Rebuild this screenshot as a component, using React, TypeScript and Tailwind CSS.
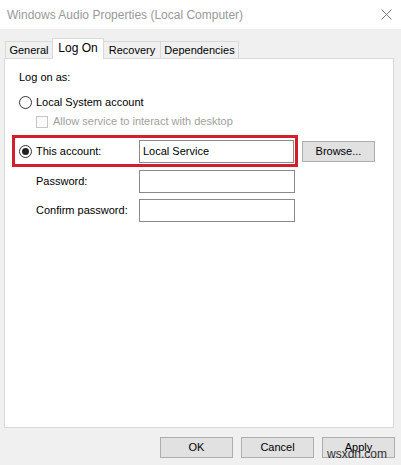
import React from "react";

const font = { fontFamily: '"Liberation Sans", Arial, sans-serif' };

function Radio({ checked }: { checked?: boolean }) {
  return (
    <span className="flex h-[13px] w-[13px] shrink-0 items-center justify-center rounded-full border border-[#333333] bg-white">
      {checked && <span className="h-[7px] w-[7px] rounded-full bg-[#222222]" />}
    </span>
  );
}

function Field({ value, w }: { value?: string; w: string }) {
  return (
    <div className={`flex h-[23px] items-center border border-[#8a8a8a] bg-white pl-[3px] text-[11px] text-black ${w}`}>
      {value}
    </div>
  );
}

function Btn({ label }: { label: string }) {
  return (
    <div className="flex h-[21px] w-[73px] items-center justify-center border border-[#adadad] bg-[#e1e1e1] text-[11px] text-black">
      {label}
    </div>
  );
}

function Tab({ label, active, w }: { label: string; active?: boolean; w: string }) {
  return active ? (
    <div
      className={`relative z-10 -mb-px -ml-px flex h-[21px] items-center justify-center border border-b-0 border-[#d9d9d9] bg-white pb-[2px] text-[12px] text-black ${w}`}
    >
      {label}
    </div>
  ) : (
    <div
      className={`-ml-px flex h-[17px] items-center justify-center border border-b-0 border-[#d9d9d9] bg-[#f0f0f0] text-[11px] text-black first:ml-0 ${w}`}
    >
      {label}
    </div>
  );
}

export default function App() {
  return (
    <div className="relative h-[465px] w-[401px] overflow-hidden bg-[#f0f0f0]" style={font}>
      {/* title bar */}
      <div className="flex h-[29px] items-center justify-between bg-white pl-[7px] pr-[9px]">
        <span className="text-[12px] text-[#999999]">Windows Audio Properties (Local Computer)</span>
        <svg width="11" height="11" viewBox="0 0 11 11" className="mb-[1px]">
          <path d="M0.5 0.5 L10.5 10.5 M10.5 0.5 L0.5 10.5" stroke="#7a7a7a" strokeWidth="1" fill="none" />
        </svg>
      </div>

      <div className="pl-[4px] pr-[7px] pt-[9px]">
        {/* tabs */}
        <div className="flex h-[20px] items-end pl-[1px]">
          <Tab label="General" w="w-[48px]" />
          <Tab label="Log On" active w="w-[52px]" />
          <Tab label="Recovery" w="w-[58px]" />
          <Tab label="Dependencies" w="w-[79px]" />
        </div>

        {/* page */}
        <div className="h-[370px] w-[390px] border border-[#d9d9d9] bg-white text-[11px] text-black">
          <div className="mt-[11px] pl-[14px] leading-[15px]">Log on as:</div>

          <div className="mt-[10px] flex h-[15px] items-center pl-[14px]">
            <Radio />
            <span className="ml-[4px]">Local System account</span>
          </div>

          <div className="mt-[4px] flex h-[15px] items-center pl-[31px]">
            <span className="h-[12px] w-[12px] border border-[#c6c6c6] bg-[#fafafa]" />
            <span className="ml-[5px] text-[#a0a0a0]">Allow service to interact with desktop</span>
          </div>

          <div className="mt-[6px] flex items-center pl-[7px]">
            <div className="flex h-[32px] w-[286px] items-center border-[3px] border-[#d11f2c] pl-[4px]">
              <div className="flex w-[120px] items-center">
                <Radio checked />
                <span className="ml-[4px]">This account:</span>
              </div>
              <Field value="Local Service" w="w-[155px]" />
            </div>
            <div className="ml-[4px] mt-[1px]">
              <Btn label="Browse..." />
            </div>
          </div>

          <div className="mt-[3px] flex items-center pl-[31px]">
            <span className="w-[103px]">Password:</span>
            <Field w="w-[156px]" />
          </div>

          <div className="mt-[6px] flex items-center pl-[31px]">
            <span className="w-[103px]">Confirm password:</span>
            <Field w="w-[156px]" />
          </div>
        </div>
      </div>

      {/* dialog buttons */}
      <div className="mt-[9px] flex justify-end gap-[8px] pr-[6px]">
        <Btn label="OK" />
        <Btn label="Cancel" />
        <Btn label="Apply" />
      </div>

      <span className="absolute left-[327px] top-[448px] text-[12px] leading-[12px] text-[#333333]">wsxdn.com</span>
    </div>
  );
}
